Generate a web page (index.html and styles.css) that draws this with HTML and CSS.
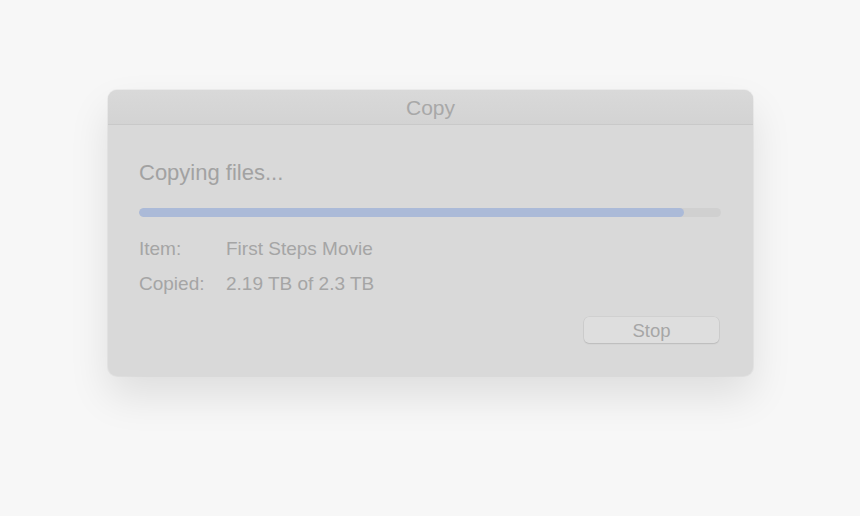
FILE: index.html
```html
<!DOCTYPE html>
<html>
<head>
<meta charset="utf-8">
<link rel="stylesheet" href="styles.css">
</head>
<body>
<div class="window">
  <div class="titlebar">Copy</div>
  <div class="content">
    <div class="heading">Copying files...</div>
    <div class="progress"><div class="fill" style="width: 93.6%"></div></div>
    <div class="row"><span class="label">Item:</span><span class="value">First Steps Movie</span></div>
    <div class="row"><span class="label">Copied:</span><span class="value">2.19 TB of 2.3 TB</span></div>
    <div class="actions"><button class="btn">Stop</button></div>
  </div>
</div>
</body>
</html>
```
FILE: styles.css
```css
html, body {
  margin: 0;
  padding: 0;
  background: #f7f7f7;
  font-family: "Liberation Sans", Arial, sans-serif;
}
body {
  padding: 90px 0 0 108px;
  height: 516px;
  box-sizing: border-box;
}
.window {
  width: 645px;
  height: 286px;
  box-sizing: border-box;
  background: #d9d9d9;
  border-radius: 9px;
  box-shadow: 0 0 0 1px rgba(0,0,0,0.04), 0 20px 40px rgba(0,0,0,0.10);
  overflow: hidden;
  display: flex;
  flex-direction: column;
}
.titlebar {
  height: 35px;
  box-sizing: border-box;
  border-bottom: 1px solid #c9c9c9;
  background: linear-gradient(#d9d9d9, #d3d3d3);
  color: #a8a8a8;
  font-size: 21px;
  text-align: center;
  line-height: 36px;
}
.content {
  flex: 1;
  padding: 35px 32px 0 31px;
  display: flex;
  flex-direction: column;
}
.heading {
  font-size: 22px;
  line-height: 26px;
  color: #a2a2a2;
  margin-bottom: 22px;
}
.progress {
  height: 9px;
  border-radius: 5px;
  background: #d0d0d0;
  overflow: hidden;
  margin-bottom: 14px;
}
.fill {
  height: 100%;
  background: #abbad8;
  border-radius: 5px;
}
.row {
  display: flex;
  font-size: 19px;
  line-height: 35px;
  color: #a5a5a5;
}
.label {
  width: 87px;
}
.actions {
  display: flex;
  justify-content: flex-end;
  margin-top: 16px;
  padding-right: 2px;
}
.btn {
  width: 135px;
  height: 26px;
  border: none;
  border-radius: 5px;
  background: #dedede;
  box-shadow: 0 0 0 0.5px rgba(0,0,0,0.08), 0 1px 1.5px rgba(0,0,0,0.10);
  color: #a6a6a6;
  font-family: "Liberation Sans", Arial, sans-serif;
  font-size: 18.5px;
  padding: 0;
  line-height: 27px;
}
```
